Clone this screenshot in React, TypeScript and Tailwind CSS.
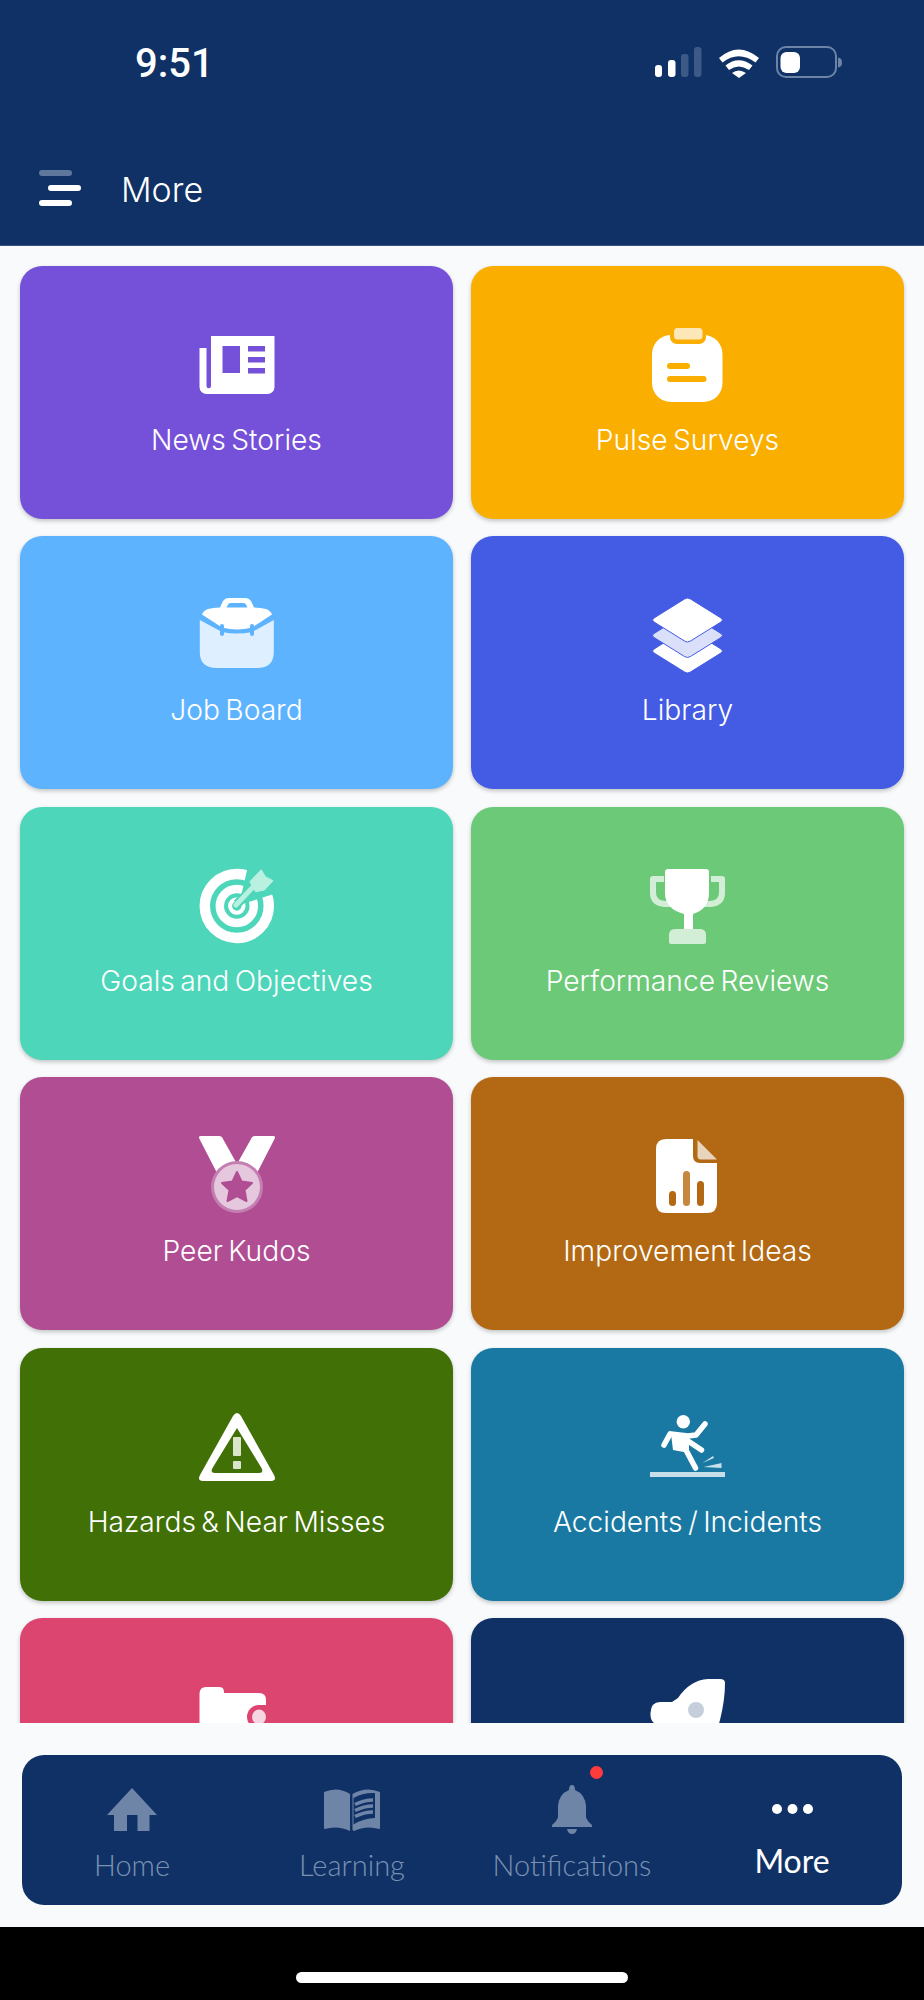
import type { ReactNode } from 'react';

const NAV_MUTED = '#6e85a8';

function Box({ children }: { children: ReactNode }) {
  return (
    <svg width="76" height="76" viewBox="0 0 76 76" className="shrink-0 overflow-visible">
      {children}
    </svg>
  );
}

function NewsIcon() {
  return (
    <Box>
      <path
        fill="#fff"
        fillRule="evenodd"
        d="M12 8H75.5V59a7 7 0 0 1-7 7H7.5a7 7 0 0 1-7-7V20H7.5V58a2.25 2.25 0 0 0 4.5 0ZM23.5 18V45H41V18ZM49 18V23.5H66V18ZM49 29V34.5H66V29ZM49 40V45.5H66V40Z"
      />
    </Box>
  );
}

function ClipboardIcon() {
  const bg = '#faae00';
  return (
    <Box>
      <rect x="2" y="7" width="70.5" height="67" rx="19" fill="#fff" />
      <path d="M20 3H56V9a7 7 0 0 1-7 7H27a7 7 0 0 1-7-7Z" fill={bg} />
      <rect x="24" y="0" width="28.5" height="11.5" rx="3.5" fill="#fde7b8" />
      <rect x="17" y="35" width="23" height="6" rx="3" fill={bg} />
      <rect x="17" y="48" width="39.5" height="6" rx="3" fill={bg} />
    </Box>
  );
}

function CaseIcon() {
  const bg = '#5eb3ff';
  return (
    <Box>
      <path d="M.8 22 23 34Q38 37 53 34L74.800 22V54Q74.800 70 58 70H18Q.8 70 .8 54Z" fill="#def0ff" />
      <path
        fill="#fff"
        fillRule="evenodd"
        d="M21 9.500 23.500 4Q25.500 0 30 0H46Q50.500 0 52.500 4L55 9.500Q62 9.500 67 11 72 13 73 16.500L53 29.500Q38 33.500 23 29.500L3 16.500Q4 13 9 11 14 9.500 21 9.500ZM27.500 9.500H48.500L47 6.500Q46.500 5 44.500 5H31.500Q29.500 5 29 6.500Z"
      />
      <rect x="21" y="26" width="4" height="12" rx="2" fill={bg} />
      <rect x="51" y="26" width="4" height="12" rx="2" fill={bg} />
    </Box>
  );
}

function LayersIcon() {
  const bg = '#445be3';
  const diamond = (y: number, fill: string) => (
    <path
      d={`M34.500 ${y + 1}Q37.500 ${y - 1} 40.500 ${y + 1}L71 ${y + 20}Q74 ${y + 22} 71 ${y + 24}L40.500 ${y + 43}Q37.500 ${y + 45} 34.500 ${y + 43}L4 ${y + 24}Q1 ${y + 22} 4 ${y + 20}Z`}
      fill={fill}
      stroke={bg}
      strokeWidth="1"
    />
  );
  return (
    <Box>
      {diamond(31, '#fff')}
      {diamond(15.500, '#dadffa')}
      {diamond(0, '#fff')}
    </Box>
  );
}

function TargetIcon() {
  const bg = '#4dd6b9';
  return (
    <Box>
      <circle cx="37.800" cy="37" r="32" fill="none" stroke="#fff" strokeWidth="10.500" />
      <circle cx="37.800" cy="37" r="17" fill="none" stroke="#fff" strokeWidth="8.500" />
      <circle cx="37.800" cy="37" r="6.700" fill="none" stroke="#fff" strokeWidth="4" />
      <path d="M40 36 49 -3 78 24Z" fill={bg} />
      <path d="M38 35 52 21" stroke={bg} strokeWidth="9" />
      <path d="M37 36 56 16" stroke="#b9f0e0" strokeWidth="5" strokeLinecap="round" />
      <path
        d="M62.200 .8 66.500 7.700 74 11.700 65.500 21 56.500 22.700 50.800 12.700Z"
        fill="#b9f0e0"
        stroke="#b9f0e0"
        strokeWidth="1"
        strokeLinejoin="round"
      />
    </Box>
  );
}

function TrophyIcon() {
  return (
    <Box>
      <path
        d="M14 10H3V24Q3 34 15 35H22"
        fill="none"
        stroke="#d3eed6"
        strokeWidth="6"
        strokeLinejoin="round"
      />
      <path
        d="M61 10H72V24Q72 34 60 35H53"
        fill="none"
        stroke="#d3eed6"
        strokeWidth="6"
        strokeLinejoin="round"
      />
      <path d="M15 3Q15 0 18 0H56Q59 0 59 3V24Q59 40 43 45V60H34V45Q15 40 15 24Z" fill="#fff" />
      <path d="M19 66Q19 60 25 60H50Q56 60 56 66V73Q56 75 54 75H21Q19 75 19 73Z" fill="#d3eed6" />
    </Box>
  );
}

function MedalIcon() {
  return (
    <Box>
      <path
        d="M2 -3H20Q23 -3 24 0L38 25 52 0Q53 -3 56 -3H74Q77 -3 75.500 0L58 34H18L.5 0Q-1 -3 2 -3Z"
        fill="#fff"
      />
      <circle cx="38" cy="48" r="26" fill="#c47fb2" />
      <circle cx="38" cy="48" r="23" fill="#e5c8de" />
      <path
        d="M38 33 42.500 42.500 53 44 45.500 51 47.500 62 38 57 28.500 62 30.500 51 23 44 33.500 42.500Z"
        fill="#b04d93"
        stroke="#b04d93"
        strokeWidth="2"
        strokeLinejoin="round"
      />
    </Box>
  );
}

function DocIcon() {
  return (
    <Box>
      <path d="M16 0H43V17Q43 24 50 24H67V64Q67 74 57 74H16Q6 74 6 64V10Q6 0 16 0Z" fill="#fff" />
      <path d="M47.500 1 67 20.500H51Q47.500 20.500 47.500 17Z" fill="#e8d3bc" />
      <rect x="19" y="52" width="7" height="15" rx="3.500" fill="#b36913" />
      <rect x="33" y="32" width="7" height="35" rx="3.500" fill="#c8873f" />
      <rect x="47" y="42" width="7" height="25" rx="3.500" fill="#b36913" />
    </Box>
  );
}

function WarningIcon() {
  return (
    <Box>
      <path
        fill="#fff"
        fillRule="evenodd"
        d="M34 6Q38 0 42 6L75 65Q78 71 72 71H4Q-2 71 1 65ZM38 18 13.500 58Q11 63 16 63H60Q65 63 62.500 58Z"
      />
      <rect x="34" y="27" width="8" height="19" rx="1" fill="#dbe5cc" />
      <rect x="34" y="51" width="8" height="8" rx="1" fill="#dbe5cc" />
    </Box>
  );
}

function SlipIcon() {
  return (
    <Box>
      <circle cx="33.300" cy="11.700" r="6.700" fill="#fff" />
      <path
        d="M20 24 14 35M21 24 38 26 46 25 55 14M33 30 30 38M38 31 51.500 40M36.500 41 45.500 58"
        fill="none"
        stroke="#fff"
        strokeWidth="5.500"
        strokeLinecap="round"
        strokeLinejoin="round"
      />
      <path d="M21 24 39 25 39 43 23 40Z" fill="#fff" />
      <path d="M52.500 53 63 46 64 48Z M53.500 57 71.500 53 71.500 58Z" fill="#c6dfe9" />
      <rect x="0" y="62" width="75" height="5" fill="#c6dfe9" />
    </Box>
  );
}

function FolderIcon() {
  const bg = '#dc4570';
  return (
    <Box>
      <path d="M.5 14Q.5 7 7 7H20Q25 7 25 12V13H60Q67 13 67 20V76H.5Z" fill="#fff" />
      <circle cx="60" cy="37" r="13" fill="#fff" />
      <path d="M60 25A12 12 0 1 0 60 49H74V25Z" fill={bg} />
      <ellipse cx="60" cy="37" rx="7" ry="7.500" fill="#f6d6e0" />
    </Box>
  );
}

function RocketIcon() {
  return (
    <Box>
      <path
        d="M75 3Q75 -1 70 -1H58Q40 0 28 18L22 22H10Q1 22 .5 33 0 43 8 45H25V76H60L70 40Q75 20 75 3Z"
        fill="#fff"
      />
      <ellipse cx="46" cy="30" rx="8" ry="8" fill="#c5cfdc" />
    </Box>
  );
}

const TILES = [
  { label: 'News Stories', bg: 'bg-[#7551d9]', icon: <NewsIcon /> },
  { label: 'Pulse Surveys', bg: 'bg-[#faae00]', icon: <ClipboardIcon /> },
  { label: 'Job Board', bg: 'bg-[#5eb3ff]', icon: <CaseIcon /> },
  { label: 'Library', bg: 'bg-[#445be3]', icon: <LayersIcon /> },
  { label: 'Goals and Objectives', bg: 'bg-[#4dd6b9]', icon: <TargetIcon /> },
  { label: 'Performance Reviews', bg: 'bg-[#6bc977]', icon: <TrophyIcon /> },
  { label: 'Peer Kudos', bg: 'bg-[#b04d93]', icon: <MedalIcon /> },
  { label: 'Improvement Ideas', bg: 'bg-[#b36913]', icon: <DocIcon /> },
  { label: 'Hazards & Near Misses', bg: 'bg-[#417006]', icon: <WarningIcon /> },
  { label: 'Accidents / Incidents', bg: 'bg-[#1a79a2]', icon: <SlipIcon /> },
  { label: '', bg: 'bg-[#dc4570]', icon: <FolderIcon /> },
  { label: '', bg: 'bg-[#0f3166]', icon: <RocketIcon /> },
];

function StatusIcons() {
  return (
    <svg width="188" height="32" viewBox="0 0 188 32" className="overflow-visible">
      <rect x="0" y="18" width="7" height="12" rx="3" fill="#fff" />
      <rect x="13" y="13" width="7.500" height="17" rx="3" fill="#fff" />
      <rect x="26" y="7" width="7.500" height="23" rx="3" fill="#3d5a87" />
      <rect x="39" y="0" width="7.500" height="30" rx="3" fill="#3d5a87" />
      <path
        d="M64 11Q83.500 -6 104 11L100.500 15.500Q83.500 3 67.500 15.500Z M70.500 18.500Q83.500 8 97.500 18.500L94 23Q83.500 16 74 23Z M77 26Q83.500 21 91 26L84 31Z"
        fill="#fff"
      />
      <rect x="122" y="0" width="59" height="30" rx="9" fill="none" stroke="#6d84a6" strokeWidth="2" />
      <rect x="125.500" y="5" width="19.500" height="21" rx="6" fill="#fff" />
      <path d="M183 10.500Q187 11 187 15.500T183 20.500Z" fill="#6d84a6" />
    </svg>
  );
}

function HomeGlyph() {
  return (
    <svg width="50" height="43" viewBox="0 0 50 43">
      <path d="M25 0 50 27H42.500V43H30.500V27H20V43H7V27H0Z" fill={NAV_MUTED} />
    </svg>
  );
}

function BookGlyph() {
  return (
    <svg width="56" height="43" viewBox="0 0 56 43">
      <path d="M26 6V43Q14 37 .5 41 0 41 0 40V4Q14 -2 26 6Z" fill={NAV_MUTED} />
      <path fill={NAV_MUTED} d="M28.500 6Q42 -2 56 4V40Q56 41 55.500 41 42 37 30 43L28.500 42Z" />
      <path d="M29.500 10Q39 4.500 51 5V30Q40 30 29.500 36.500Z" fill="#0f3166" />
      <path
        d="M31 16.500Q40 12 49 12M31 22.500Q40 18 49 18M31 28.500Q40 24 49 24"
        fill="none"
        stroke={NAV_MUTED}
        strokeWidth="3.500"
      />
    </svg>
  );
}

function BellGlyph() {
  return (
    <svg width="40" height="49" viewBox="0 0 40 49">
      <path
        d="M17 5Q17 0 20 0T23 5Q33 9 34 21V32Q35 36 40 40V42H0V40Q5 36 6 32V21Q7 9 17 5Z"
        fill={NAV_MUTED}
      />
      <path d="M15 44H25Q24 49 20 49T15 44Z" fill={NAV_MUTED} />
    </svg>
  );
}

function DotsGlyph() {
  return (
    <svg width="41" height="10" viewBox="0 0 41 10">
      <circle cx="5" cy="5" r="5" fill="#fff" />
      <circle cx="20.500" cy="5" r="5" fill="#fff" />
      <circle cx="36" cy="5" r="5" fill="#fff" />
    </svg>
  );
}

function NavItem({ icon, label, active }: { icon: ReactNode; label: string; active?: boolean }) {
  return (
    <div className="flex flex-col items-center pt-[29px]">
      <div className="flex h-[50px] items-center justify-center">{icon}</div>
      <span
        className={
          active
            ? 'mt-[10px] text-[32px] leading-[34px] text-white'
            : 'mt-[14px] text-[29px] font-light leading-[34px] text-[#7a91b3]'
        }
      >
        {label}
      </span>
    </div>
  );
}

export default function App() {
  return (
    <div
      className="flex h-[2000px] w-[924px] flex-col overflow-hidden bg-[#f8fafc]"
      style={{ fontFamily: 'Lato, "Liberation Sans", sans-serif' }}
    >
      <header className="flex h-[246px] shrink-0 flex-col border-b border-[#3a5280] bg-[#0f3166] text-white">
        <div className="flex items-start justify-between pl-[135px] pr-[81px] pt-[40px]">
          <span className="font-['Roboto'] text-[40px] font-medium leading-[48px]">9:51</span>
          <div className="pt-[7px]">
            <StatusIcons />
          </div>
        </div>
        <div className="mt-[77px] flex items-center pl-[39px]">
          <div className="flex w-[42px] flex-col gap-[9px]">
            <div className="h-[6px] w-[33px] rounded-full bg-[#5d779d]" />
            <div className="ml-[9px] h-[6px] w-[33px] rounded-full bg-white" />
            <div className="h-[6px] w-[33px] rounded-full bg-white" />
          </div>
          <span className="ml-[40px] mt-[5px] font-['Inter'] text-[34px] font-light leading-[40px]">More</span>
        </div>
      </header>

      <main className="h-[1477px] shrink-0 overflow-hidden px-[20px] pt-[20px]">
        <div className="grid grid-cols-2 gap-x-[18px] gap-y-[17.4px]">
          {TILES.map((tile, i) => (
            <div
              key={i}
              className={`flex h-[253px] flex-col items-center rounded-[22px] pt-[62px] shadow-[0_2px_4px_rgba(0,0,0,0.22)] ${tile.bg}`}
            >
              {tile.icon}
              <span className="mt-[18px] font-['Inter'] text-[28.2px] font-light leading-[36px] text-white [word-spacing:-2.5px]">
                {tile.label}
              </span>
            </div>
          ))}
        </div>
      </main>

      <div className="flex-1 px-[22px] pt-[32px]">
        <nav className="relative grid h-[150px] grid-cols-4 rounded-[22px] bg-[#0f3166]">
          <NavItem icon={<HomeGlyph />} label="Home" />
          <NavItem icon={<BookGlyph />} label="Learning" />
          <NavItem icon={<BellGlyph />} label="Notifications" />
          <NavItem icon={<DotsGlyph />} label="More" active />
          <span className="absolute left-[568px] top-[11px] h-[13px] w-[13px] rounded-full bg-[#ff3b3b]" />
        </nav>
      </div>

      <div className="flex h-[73px] shrink-0 justify-center bg-black pt-[45px]">
        <div className="h-[11px] w-[332px] rounded-full bg-white" />
      </div>
    </div>
  );
}
